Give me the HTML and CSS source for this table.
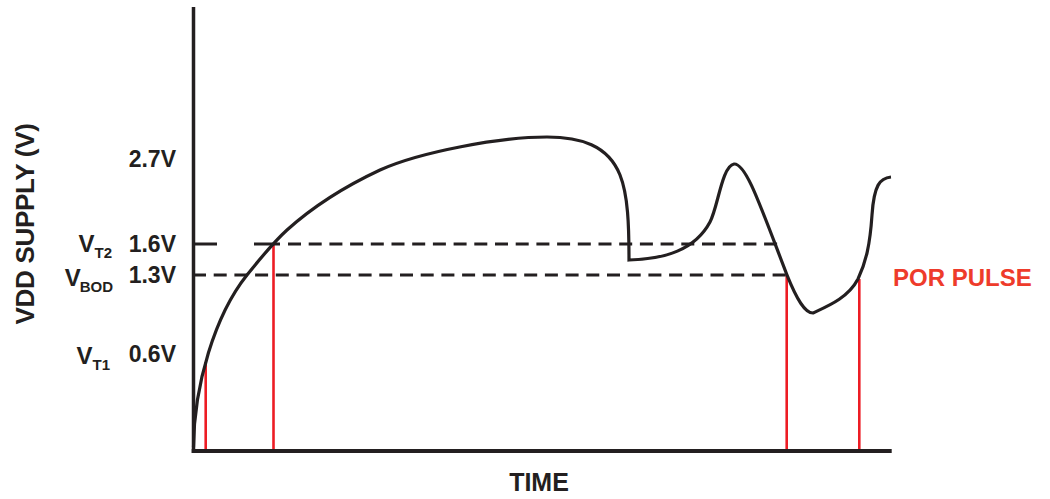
FILE: index.html
```html
<!DOCTYPE html>
<html lang="en">
<head>
<meta charset="utf-8">
<title>POR / BOD diagram</title>
<link rel="stylesheet" href="styles.css">
</head>
<body>
<div class="figure">
  <svg class="chart" width="1050" height="499" viewBox="0 0 1050 499" xmlns="http://www.w3.org/2000/svg">
    <!-- red reset pulse markers -->
    <g class="pulse">
      <line x1="205.7" y1="362" x2="205.7" y2="450"/>
      <line x1="273.5" y1="244" x2="273.5" y2="450"/>
      <line x1="786.7" y1="275" x2="786.7" y2="450"/>
      <line x1="859.3" y1="279" x2="859.3" y2="450"/>
    </g>
    <!-- threshold lines -->
    <g class="dash-solid">
      <line x1="193" y1="244" x2="217" y2="244"/>
      <line x1="254" y1="244" x2="280" y2="244"/>
    </g>
    <g class="dash">
      <line x1="288" y1="244" x2="778" y2="244"/>
      <line x1="193" y1="275" x2="787" y2="275"/>
    </g>
    <!-- supply curve -->
    <path class="curve" d="M193.5 447 C194 385 215 315 247 275 C259 260 276 240 287 230 C317 203 350 184 380 170 C420 152 500 137 547 137 C580 137 608 145 620 175 C628 195 629 225 629 260 L629 260 C665 259 695 250 710 222 C718 207 722 166 734 164 C746 163 760 205 787 275 C797 300 805 313 813 313 C828 306 848 298 858 279 C866 262 870 245 872 215 C874 185 880 178 891 177"/>
    <!-- axes -->
    <line class="axis" x1="193.5" y1="7" x2="193.5" y2="453"/>
    <line class="axis axis-x" x1="191.7" y1="451" x2="891.7" y2="451"/>

    <!-- labels -->
    <text class="title title-y" transform="translate(34 224) rotate(-90)">VDD SUPPLY (V)</text>
    <text class="title" x="539" y="491">TIME</text>

    <text class="val" x="176" y="167">2.7V</text>
    <text class="val" x="176" y="252">1.6V</text>
    <text class="val" x="176" y="283">1.3V</text>
    <text class="val" x="176" y="362">0.6V</text>

    <text class="sym" x="112" y="252">V<tspan class="sub" dy="6">T2</tspan></text>
    <text class="sym" x="113" y="286">V<tspan class="sub" dx="-1" dy="6">BOD</tspan></text>
    <text class="sym" x="110" y="364">V<tspan class="sub" dy="6">T1</tspan></text>

    <text class="por" x="893" y="286">POR PULSE</text>
  </svg>
</div>
</body>
</html>
```

FILE: styles.css
```css
html, body {
  margin: 0;
  padding: 0;
  background: #ffffff;
}

.figure {
  width: 1050px;
  height: 499px;
  overflow: hidden;
}

.chart {
  display: block;
  font-family: "Liberation Sans", Arial, Helvetica, sans-serif;
  font-weight: bold;
}

.pulse line {
  stroke: #ed1c24;
  stroke-width: 2.6;
}

.dash-solid line,
.dash line {
  stroke: #231f20;
  stroke-width: 3;
}

.dash line {
  stroke-dasharray: 13 7.7;
}

.curve {
  fill: none;
  stroke: #231f20;
  stroke-width: 3.2;
  stroke-linejoin: miter;
}

.axis {
  stroke: #231f20;
  stroke-width: 3.5;
}

.axis-x {
  stroke-width: 4;
}

.title {
  font-size: 25px;
  fill: #231f20;
  text-anchor: middle;
}

.title-y {
  font-size: 26px;
  letter-spacing: -0.3px;
}

.val {
  font-size: 23px;
  fill: #231f20;
  text-anchor: end;
}

.sym {
  font-size: 24px;
  fill: #231f20;
  text-anchor: end;
}

.sub {
  font-size: 15px;
}

.por {
  font-size: 24px;
  fill: #ee3b2b;
}
```
